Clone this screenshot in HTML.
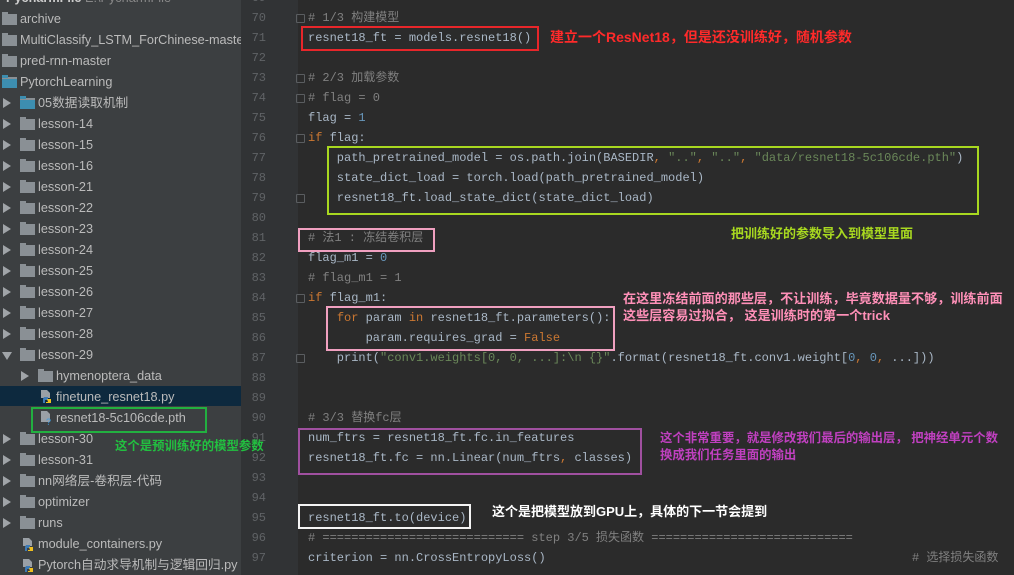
<!DOCTYPE html>
<html><head><meta charset="utf-8"><style>
*{margin:0;padding:0;box-sizing:border-box}
body{width:1014px;height:575px;overflow:hidden;background:#2b2b2b;position:relative;font-family:"Liberation Sans","Noto Sans CJK SC",sans-serif}
#side{position:absolute;left:0;top:0;width:241px;height:575px;background:#3c3f41;overflow:hidden}
#gut{position:absolute;left:241px;top:0;width:57px;height:575px;background:#313335}
.r{position:absolute;height:21px;line-height:21px;font-size:12.7px;color:#bbbbbb;white-space:nowrap}
.ar{position:absolute;width:0;height:0;border-top:5px solid transparent;border-bottom:5px solid transparent;border-left:8px solid #a0a4a8}
.ard{position:absolute;width:0;height:0;border-left:5px solid transparent;border-right:5px solid transparent;border-top:8px solid #a0a4a8}
.fd{position:absolute;width:15px;height:11px;background:#8a9095;border-top:2px solid #8a9095}
.fd:before{content:"";position:absolute;left:0;top:-4px;width:6px;height:3px;background:#8a9095}
.fb{background:#3d8eb0}.fb:before{background:#3d8eb0}
.py{position:absolute;width:12px;height:15px}
.ln{position:absolute;left:241px;width:25px;text-align:right;font:12px "Liberation Mono",monospace;color:#606366;line-height:20px}
.c{position:absolute;left:308px;font:12px "Liberation Mono","Noto Sans CJK SC",monospace;color:#a9b7c6;line-height:20px;white-space:pre}
.cm{color:#808080}.kw{color:#cc7832}.nu{color:#6897bb}.st{color:#6a8759}
.bx{position:absolute;border:2px solid}
.an{position:absolute;font-weight:bold;font-size:13px;white-space:nowrap;line-height:17px;font-family:"Liberation Sans","Noto Sans CJK SC",sans-serif}
.fm{position:absolute;left:296px;width:9px;height:9px;border:1px solid #5a5d60;border-radius:1px}
</style></head><body>
<div id="side">
<div class="r" style="left:6px;top:-12px;font-weight:bold;color:#ccc">PycharmFile <span style="font-weight:normal;color:#888">E:\PycharmFile</span></div>
<div class="fd" style="left:2px;top:14px"></div><div class="r" style="left:20px;top:9px">archive</div>
<div class="fd" style="left:2px;top:35px"></div><div class="r" style="left:20px;top:30px">MultiClassify_LSTM_ForChinese-master</div>
<div class="fd" style="left:2px;top:56px"></div><div class="r" style="left:20px;top:51px">pred-rnn-master</div>
<div class="fd fb" style="left:2px;top:77px"></div><div class="r" style="left:20px;top:72px">PytorchLearning</div>

<div class="ar" style="left:3px;top:98px"></div><div class="fd fb" style="left:20px;top:98px"></div><div class="r" style="left:38px;top:93px">05数据读取机制</div>
<div class="ar" style="left:3px;top:119px"></div><div class="fd" style="left:20px;top:119px"></div><div class="r" style="left:38px;top:114px">lesson-14</div>
<div class="ar" style="left:3px;top:140px"></div><div class="fd" style="left:20px;top:140px"></div><div class="r" style="left:38px;top:135px">lesson-15</div>
<div class="ar" style="left:3px;top:161px"></div><div class="fd" style="left:20px;top:161px"></div><div class="r" style="left:38px;top:156px">lesson-16</div>
<div class="ar" style="left:3px;top:182px"></div><div class="fd" style="left:20px;top:182px"></div><div class="r" style="left:38px;top:177px">lesson-21</div>
<div class="ar" style="left:3px;top:203px"></div><div class="fd" style="left:20px;top:203px"></div><div class="r" style="left:38px;top:198px">lesson-22</div>
<div class="ar" style="left:3px;top:224px"></div><div class="fd" style="left:20px;top:224px"></div><div class="r" style="left:38px;top:219px">lesson-23</div>
<div class="ar" style="left:3px;top:245px"></div><div class="fd" style="left:20px;top:245px"></div><div class="r" style="left:38px;top:240px">lesson-24</div>
<div class="ar" style="left:3px;top:266px"></div><div class="fd" style="left:20px;top:266px"></div><div class="r" style="left:38px;top:261px">lesson-25</div>
<div class="ar" style="left:3px;top:287px"></div><div class="fd" style="left:20px;top:287px"></div><div class="r" style="left:38px;top:282px">lesson-26</div>
<div class="ar" style="left:3px;top:308px"></div><div class="fd" style="left:20px;top:308px"></div><div class="r" style="left:38px;top:303px">lesson-27</div>
<div class="ar" style="left:3px;top:329px"></div><div class="fd" style="left:20px;top:329px"></div><div class="r" style="left:38px;top:324px">lesson-28</div>
<div class="ard" style="left:2px;top:352px"></div><div class="fd" style="left:20px;top:350px"></div><div class="r" style="left:38px;top:345px">lesson-29</div>
<div class="ar" style="left:21px;top:371px"></div><div class="fd" style="left:38px;top:371px"></div><div class="r" style="left:56px;top:366px">hymenoptera_data</div>
<div style="position:absolute;left:0;top:386px;width:241px;height:20px;background:#0d293e"></div>
<svg class="py" style="left:40px;top:389px" viewBox="0 0 12 15"><path d="M1 1h6l3 3v5H1z" fill="#9aa0a6"/><path d="M4 8h4v3H5v3H3v-4z" fill="#3d7ab5"/><path d="M7 10h4v4H6v-1h2z" fill="#f0c020"/></svg>
<div class="r" style="left:56px;top:387px">finetune_resnet18.py</div>
<svg class="py" style="left:40px;top:410px" viewBox="0 0 12 15"><path d="M1 1h6l3 3v8H1z" fill="#9aa0a6"/><text x="6" y="15" font-size="9" fill="#3d9be0" font-family="Liberation Sans">?</text></svg>
<div class="r" style="left:56px;top:408px">resnet18-5c106cde.pth</div>
<div class="ar" style="left:3px;top:434px"></div><div class="fd" style="left:20px;top:434px"></div><div class="r" style="left:38px;top:429px">lesson-30</div>
<div class="ar" style="left:3px;top:455px"></div><div class="fd" style="left:20px;top:455px"></div><div class="r" style="left:38px;top:450px">lesson-31</div>
<div class="ar" style="left:3px;top:476px"></div><div class="fd" style="left:20px;top:476px"></div><div class="r" style="left:38px;top:471px">nn网络层-卷积层-代码</div>
<div class="ar" style="left:3px;top:497px"></div><div class="fd" style="left:20px;top:497px"></div><div class="r" style="left:38px;top:492px">optimizer</div>
<div class="ar" style="left:3px;top:518px"></div><div class="fd" style="left:20px;top:518px"></div><div class="r" style="left:38px;top:513px">runs</div>
<svg class="py" style="left:22px;top:537px" viewBox="0 0 12 15"><path d="M1 1h6l3 3v5H1z" fill="#9aa0a6"/><path d="M4 8h4v3H5v3H3v-4z" fill="#3d7ab5"/><path d="M7 10h4v4H6v-1h2z" fill="#f0c020"/></svg>
<div class="r" style="left:38px;top:534px">module_containers.py</div>
<svg class="py" style="left:22px;top:558px" viewBox="0 0 12 15"><path d="M1 1h6l3 3v5H1z" fill="#9aa0a6"/><path d="M4 8h4v3H5v3H3v-4z" fill="#3d7ab5"/><path d="M7 10h4v4H6v-1h2z" fill="#f0c020"/></svg>
<div class="r" style="left:38px;top:555px">Pytorch自动求导机制与逻辑回归.py</div>
<div class="bx" style="left:31px;top:407px;width:176px;height:26px;border-color:#22b040"></div>
</div>
<div id="gut"></div>

<div class="ln" style="top:-12px">69</div>
<div class="ln" style="top:8px">70</div><div class="ln" style="top:28px">71</div><div class="ln" style="top:48px">72</div><div class="ln" style="top:68px">73</div><div class="ln" style="top:88px">74</div><div class="ln" style="top:108px">75</div><div class="ln" style="top:128px">76</div><div class="ln" style="top:148px">77</div><div class="ln" style="top:168px">78</div><div class="ln" style="top:188px">79</div><div class="ln" style="top:208px">80</div><div class="ln" style="top:228px">81</div><div class="ln" style="top:248px">82</div><div class="ln" style="top:268px">83</div><div class="ln" style="top:288px">84</div><div class="ln" style="top:308px">85</div><div class="ln" style="top:328px">86</div><div class="ln" style="top:348px">87</div><div class="ln" style="top:368px">88</div><div class="ln" style="top:388px">89</div><div class="ln" style="top:408px">90</div><div class="ln" style="top:428px">91</div><div class="ln" style="top:448px">92</div><div class="ln" style="top:468px">93</div><div class="ln" style="top:488px">94</div><div class="ln" style="top:508px">95</div><div class="ln" style="top:528px">96</div><div class="ln" style="top:548px">97</div>

<div class="fm" style="top:14px"></div><div class="fm" style="top:74px"></div><div class="fm" style="top:94px"></div><div class="fm" style="top:134px"></div><div class="fm" style="top:194px"></div><div class="fm" style="top:294px"></div><div class="fm" style="top:354px"></div>

<div class="c cm" style="top:8px"># 1/3 构建模型</div>
<div class="c" style="top:28px">resnet18_ft = models.resnet18()</div>
<div class="c cm" style="top:68px"># 2/3 加载参数</div>
<div class="c cm" style="top:88px"># flag = 0</div>
<div class="c" style="top:108px">flag = <span class="nu">1</span></div>
<div class="c" style="top:128px"><span class="kw">if</span> flag:</div>
<div class="c" style="top:148px">    path_pretrained_model = os.path.join(BASEDIR<span class="kw">,</span> <span class="st">".."</span><span class="kw">,</span> <span class="st">".."</span><span class="kw">,</span> <span class="st">"data/resnet18-5c106cde.pth"</span>)</div>
<div class="c" style="top:168px">    state_dict_load = torch.load(path_pretrained_model)</div>
<div class="c" style="top:188px">    resnet18_ft.load_state_dict(state_dict_load)</div>
<div class="c cm" style="top:228px"># 法1 : 冻结卷积层</div>
<div class="c" style="top:248px">flag_m1 = <span class="nu">0</span></div>
<div class="c cm" style="top:268px"># flag_m1 = 1</div>
<div class="c" style="top:288px"><span class="kw">if</span> flag_m1:</div>
<div class="c" style="top:308px">    <span class="kw">for</span> param <span class="kw">in</span> resnet18_ft.parameters():</div>
<div class="c" style="top:328px">        param.requires_grad = <span class="kw">False</span></div>
<div class="c" style="top:348px">    print(<span class="st">"conv1.weights[0, 0, ...]:\n {}"</span>.format(resnet18_ft.conv1.weight[<span class="nu">0</span><span class="kw">,</span> <span class="nu">0</span><span class="kw">,</span> ...]))</div>
<div class="c cm" style="top:408px"># 3/3 替换fc层</div>
<div class="c" style="top:428px">num_ftrs = resnet18_ft.fc.in_features</div>
<div class="c" style="top:448px">resnet18_ft.fc = nn.Linear(num_ftrs<span class="kw">,</span> classes)</div>
<div class="c" style="top:508px">resnet18_ft.to(device)</div>
<div class="c cm" style="top:528px"># ============================ step 3/5 损失函数 ============================</div>
<div class="c" style="top:548px">criterion = nn.CrossEntropyLoss()</div>
<div class="c cm" style="top:548px;left:912px"># 选择损失函数</div>

<div class="bx" style="left:301px;top:26px;width:238px;height:25px;border-color:#e8262a"></div>
<div class="bx" style="left:327px;top:146px;width:652px;height:69px;border-color:#a8d820"></div>
<div class="bx" style="left:298px;top:228px;width:137px;height:24px;border-color:#f0a0c0"></div>
<div class="bx" style="left:326px;top:306px;width:289px;height:45px;border-color:#f0a0c0"></div>
<div class="bx" style="left:298px;top:428px;width:344px;height:47px;border-color:#a050a0"></div>
<div class="bx" style="left:298px;top:504px;width:173px;height:25px;border-color:#f4f4f4"></div>

<div class="an" style="left:550px;top:29px;color:#ff2a2a;font-size:14px">建立一个ResNet18，但是还没训练好，随机参数</div>
<div class="an" style="left:731px;top:225px;color:#a8d820">把训练好的参数导入到模型里面</div>
<div class="an" style="left:623px;top:290px;color:#ff90b8;font-size:13.1px">在这里冻结前面的那些层，不让训练，毕竟数据量不够，训练前面<br>这些层容易过拟合， 这是训练时的第一个trick</div>
<div class="an" style="left:660px;top:430px;color:#c040c0;font-size:12.4px">这个非常重要，就是修改我们最后的输出层， 把神经单元个数<br>换成我们任务里面的输出</div>
<div class="an" style="left:492px;top:503px;color:#ffffff">这个是把模型放到GPU上，具体的下一节会提到</div>
<div class="an" style="left:115px;top:438px;color:#22c040;font-size:12.4px">这个是预训练好的模型参数</div>
</body></html>
